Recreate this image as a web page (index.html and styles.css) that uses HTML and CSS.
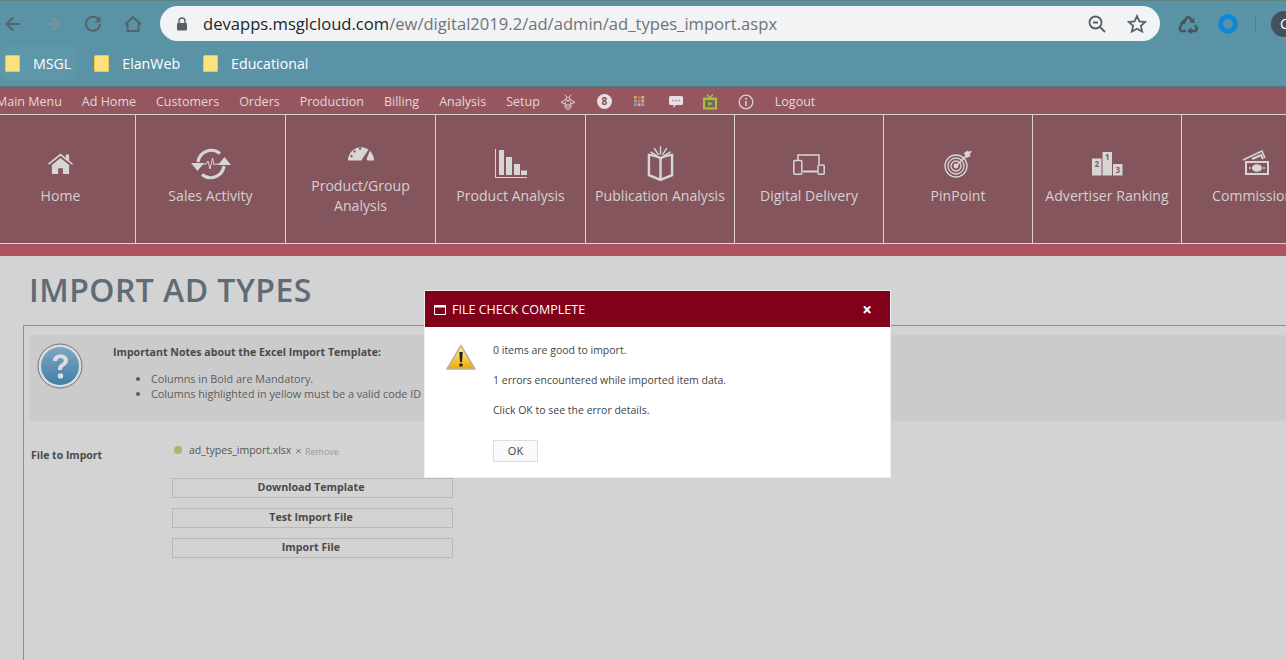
FILE: index.html
```html
<!DOCTYPE html>
<html>
<head>
	<title>Import Ad Types</title>
	<link rel="stylesheet" href="styles.css">
</head>
<body>

	<!-- Browser toolbar -->
	<div class="toolbar">
		<svg class="tool-icon back" viewBox="0 0 20 20"><path d="M17 10H4M10 3.500 3.500 10l6.500 6.500"/></svg>
		<svg class="tool-icon forward" viewBox="0 0 20 20"><path d="M3 10h13M10 3.500l6.500 6.500-6.500 6.500"/></svg>
		<svg class="tool-icon reload" viewBox="0 0 20 20"><path d="M16 6.200A7 7 0 1 0 17 10"/><path class="solid" d="M17.500 2.500v6h-6z"/></svg>
		<svg class="tool-icon home" viewBox="0 0 20 20"><path d="M2 10.500 10 3l8 7.500M4.500 9v8h11V9"/></svg>
		<div class="address">
			<svg class="lock" viewBox="0 0 12 14"><path d="M3 6V4a3 3 0 0 1 6 0v2" fill="none" stroke="#5a5f66" stroke-width="1.400"/><rect x="1" y="6" width="10" height="7.500" rx="1" fill="#5a5f66"/></svg>
			<span class="url"><b>devapps.msglcloud.com</b>/ew/digital2019.2/ad/admin/ad_types_import.aspx</span>
			<svg class="addr-icon" viewBox="0 0 20 20"><circle cx="8.500" cy="8.500" r="6"/><path d="M6 8.500h5M13 13l5 5"/></svg>
			<svg class="addr-icon star" viewBox="0 0 20 20"><path d="m10 2 2.400 5.400 5.800.6-4.300 3.900 1.200 5.700-5.100-2.900-5.100 2.900 1.200-5.700L1.800 8l5.800-.6z"/></svg>
		</div>
		<svg class="ext" viewBox="0 0 20 20"><path d="M6 8.500 9 3.500h2.500l2 3.500M17 11l2 3.500-1.500 2.500H13M8 17H3l-1.500-2.500L4 10"/><path class="solid" d="m11.500 8.500 5.500.5-1.500-5zM13.500 13.500v7l-4.500-3.500zM1.500 9.500l6 1-1-6z"/></svg>
		<span class="ring"></span>
		<span class="divider"></span>
		<span class="avatar">C</span>
	</div>

	<!-- Bookmarks -->
	<div class="bookmarks">
		<div class="bookmark current"><span class="folder"></span>MSGL</div>
		<div class="bookmark"><span class="folder"></span>ElanWeb</div>
		<div class="bookmark"><span class="folder"></span>Educational</div>
	</div>

	<!-- Text menu -->
	<div class="menu">
		<span>Main Menu</span>
		<span>Ad Home</span>
		<span>Customers</span>
		<span>Orders</span>
		<span>Production</span>
		<span>Billing</span>
		<span>Analysis</span>
		<span>Setup</span>
		<svg class="menu-icon" viewBox="0 0 16 16" fill="none" stroke="#d8d0d2"><ellipse cx="8" cy="11" rx="3" ry="4.500"/><circle cx="8" cy="5" r="1.800"/><path d="M6 5 1 8.500 5.500 10M10 5l5 3.500-4.500 1.500M6.500 3 5 .5M9.500 3 11 .5M5.200 11h5.600M5.600 13h4.800"/></svg>
		<span class="badge">8</span>
		<svg class="menu-icon grid" viewBox="0 0 12 12"><rect width="3" height="3" fill="#d9a05b"/><rect x="4" width="3" height="3" fill="#c76f6f"/><rect x="8" width="3" height="3" fill="#b9c46a"/><rect y="4" width="3" height="3" fill="#7fb58a"/><rect x="4" y="4" width="3" height="3" fill="#d07a8c"/><rect x="8" y="4" width="3" height="3" fill="#cfa9c4"/><rect y="8" width="3" height="3" fill="#7f9fd0"/><rect x="4" y="8" width="3" height="3" fill="#e0b060"/><rect x="8" y="8" width="3" height="3" fill="#70b8c4"/></svg>
		<svg class="menu-icon chat" viewBox="0 0 16 16"><path d="M2.500 2h11A1.500 1.500 0 0 1 15 3.500v6a1.500 1.500 0 0 1-1.500 1.500H8l-2.500 3V11h-3A1.500 1.500 0 0 1 1 9.500v-6A1.500 1.500 0 0 1 2.500 2z" fill="#e6e0e2"/><path d="M4 6.500h1.500M7.300 6.500h1.500M10.600 6.500h1.500" stroke="#a98a90" stroke-width="1.500"/></svg>
		<svg class="menu-icon tv" viewBox="0 0 16 16"><path d="M5 .5 8 3.500 11 .5" fill="none" stroke="#a6bf4b" stroke-width="1.300"/><rect x="1" y="3.500" width="14" height="12" fill="#a6bf4b"/><rect x="3" y="6" width="10" height="7.500" fill="#7b6a50"/><path d="m6.500 7.500 4 2.300-4 2.300z" fill="#a6bf4b"/></svg>
		<svg class="menu-icon" viewBox="0 0 16 16" fill="none" stroke="#d8d0d2" stroke-width="1.300"><circle cx="8" cy="8" r="6.800"/><path d="M8 7v5" stroke-width="1.600"/><circle cx="8" cy="4.700" r="1" fill="#d8d0d2" stroke="none"/></svg>
		<span class="logout">Logout</span>
	</div>

	<!-- Big tiles -->
	<div class="tiles">
		<div class="tile">
			<div class="tile-art">
				<svg class="art-home" viewBox="0 0 28 24" fill="#d6d6d6"><path d="M1 12 14 1.500l5.500 4.500V2.500h3.500V9l4 3-1 1.300L14 4 2 13.300z"/><path d="M5 13.500 14 6.200l9 7.300V23h-6.500v-6h-5v6H5z"/></svg>
			</div>
			<div class="tile-name">Home</div>
		</div>
		<div class="tile">
			<div class="tile-art">
				<svg class="art-sales" viewBox="0 0 40 32" fill="none" stroke="#d6d6d6"><path d="M7 14A13.500 13.500 0 0 1 29 5.500" stroke-width="3.200"/><path d="M33 18A13.500 13.500 0 0 1 11 26.500" stroke-width="3.200"/><path d="M0 15h13l-6.500 8zM27 17h13l-6.500-8z" fill="#d6d6d6" stroke="none"/><path d="M11 16h4l2-3 2 8 2.500-11 1.500 7 1.500-1H29" stroke-width="1"/></svg>
			</div>
			<div class="tile-name">Sales Activity</div>
		</div>
		<div class="tile">
			<div class="tile-art short">
				<svg class="art-gauge" viewBox="0 0 30 18" fill="#d6d6d6"><path fill-rule="evenodd" d="M1 17.500a14 14 0 0 1 28 0h-7l-1-1.500 3.500-9-1.500-1-5.500 8-2 3.500zM8 6.500a1.300 1.300 0 1 0 .01 0zM14 3.500a1.300 1.300 0 1 0 .01 0zM4.800 11.500a1.300 1.300 0 1 0 .01 0z"/></svg>
			</div>
			<div class="tile-name">Product/Group<br>Analysis</div>
		</div>
		<div class="tile">
			<div class="tile-art">
				<svg class="art-bars" viewBox="0 0 32 29" fill="#d6d6d6"><path d="M0 0h1v28h31v1H0z"/><rect x="4" y="1" width="5" height="25"/><rect x="11" y="8" width="6" height="18"/><rect x="19" y="15" width="6" height="11"/><rect x="26" y="21.500" width="6" height="4.500"/></svg>
			</div>
			<div class="tile-name">Product Analysis</div>
		</div>
		<div class="tile narrow">
			<div class="tile-art">
				<svg class="art-book" viewBox="0 0 28 36" fill="none" stroke="#d6d6d6" stroke-width="2.500"><path d="M14 12.500C10 10 6 9.500 2 9v21l12 5 12-5V9c-4 .5-8 1-12 3.500zM14 13v21"/><path d="M14 0v9M7.500 2l4.500 7M20.500 2 16 9M3.500 6l7 4M24.500 6l-7 4" stroke-width="1.500"/></svg>
			</div>
			<div class="tile-name">Publication Analysis</div>
		</div>
		<div class="tile narrow">
			<div class="tile-art">
				<svg class="art-devices" viewBox="0 0 32 21" fill="none" stroke="#d6d6d6" stroke-width="1.500"><path d="M5 6.500V1h21v9"/><rect x=".8" y="6.500" width="8" height="13.700" rx="1"/><rect x="25" y="11" width="6.200" height="9.200" rx="1"/><path d="M10 16.500h14v2H10z" fill="#d6d6d6" stroke="none"/></svg>
			</div>
			<div class="tile-name">Digital Delivery</div>
		</div>
		<div class="tile narrow">
			<div class="tile-art">
				<svg class="art-target" viewBox="0 0 28 28" fill="none" stroke="#d6d6d6" stroke-width="1.300"><circle cx="12" cy="16" r="11"/><circle cx="12" cy="16" r="8"/><circle cx="12" cy="16" r="5"/><circle cx="12" cy="16" r="1.800" fill="#d6d6d6"/><path d="M12 16 22 6" stroke-width="1.600"/><path d="m20 3 2 5 5-2-1.500-1.200L28 1l-4 .5-.5-1z" fill="#d6d6d6" stroke="none"/></svg>
			</div>
			<div class="tile-name">PinPoint</div>
		</div>
		<div class="tile narrow">
			<div class="tile-art">
				<svg class="art-podium" viewBox="0 0 31 24" fill="#d6d6d6"><rect y="6.500" width="9.500" height="17"/><rect x="10.500" width="9.500" height="23.500"/><rect x="21" y="12" width="9.500" height="11.500"/><text x="2.500" y="15" class="rank">2</text><text x="13" y="8" class="rank">1</text><text x="23.500" y="21" class="rank">3</text></svg>
			</div>
			<div class="tile-name">Advertiser Ranking</div>
		</div>
		<div class="tile narrow">
			<div class="tile-art">
				<svg class="art-money" viewBox="0 0 28 26" fill="none" stroke="#d6d6d6"><path d="M1 10 20 1l3 7" stroke-width="1.500"/><path d="M10 9l9-4 2 4" stroke-width="2"/><path fill-rule="evenodd" fill="#d6d6d6" stroke="none" d="M3 11h24v14H3zM5 13v10h20V13z"/><ellipse cx="15" cy="18" rx="5" ry="3.800" fill="#d6d6d6" stroke="none"/><path d="M7 18h2M21 18h2" stroke-width="1.500"/></svg>
			</div>
			<div class="tile-name">Commissions</div>
		</div>
	</div>
	<div class="band"></div>

	<!-- Page content -->
	<div class="page">
		<h1>IMPORT AD TYPES</h1>
		<div class="panel">
			<div class="notes">
				<svg class="help" viewBox="0 0 46 46">
					<defs>
						<linearGradient id="helpFill" x1="0" y1="0" x2="0" y2="1">
							<stop offset="0" stop-color="#7fa6c0"/>
							<stop offset="1" stop-color="#3f7fa8"/>
						</linearGradient>
					</defs>
					<circle cx="23" cy="23" r="22" fill="#dcdcdc" stroke="#6f7478" stroke-width="1"/>
					<circle cx="23" cy="23" r="19" fill="url(#helpFill)"/>
					<path d="M16 18c0-4 3-6.500 7.500-6.500 4.500 0 7.500 2.500 7.500 6 0 3-2 4.500-4 5.800-1.500 1-2 1.700-2 3.700h-4c0-3 .7-4.500 2.800-6 1.700-1.200 3-2 3-3.500 0-1.500-1.200-2.500-3.200-2.500-2 0-3.300 1.200-3.400 3z" fill="#dedede"/>
					<circle cx="23.500" cy="33" r="2.700" fill="#dedede"/>
				</svg>
				<div class="notes-text">
					<div class="notes-title">Important Notes about the Excel Import Template:</div>
					<ul>
						<li>Columns in Bold are Mandatory.</li>
						<li>Columns highlighted in yellow must be a valid code ID</li>
					</ul>
				</div>
			</div>
			<div class="file-form">
				<div class="file-label">File to Import</div>
				<div class="file-controls">
					<div class="file-row">
						<span class="dot"></span>
						<span class="file-name">ad_types_import.xlsx</span>
						<span class="remove"><i>&times;</i> Remove</span>
					</div>
					<div class="action">Download Template</div>
					<div class="action">Test Import File</div>
					<div class="action">Import File</div>
				</div>
			</div>
		</div>
	</div>

	<!-- Dialog over the page -->
	<div class="dialog">
		<div class="dialog-head">
			<svg class="window-icon" viewBox="0 0 12 11"><path d="M.5 1.500h11v9H.5z" fill="none" stroke="#fff"/><path d="M.5 1h11v2.500H.5z" fill="#fff"/></svg>
			<span class="dialog-title">FILE CHECK COMPLETE</span>
			<span class="dialog-close">&times;</span>
		</div>
		<div class="dialog-body">
			<svg class="warning" viewBox="0 0 30 27">
				<defs>
					<linearGradient id="warnFill" x1="0" y1="0" x2="0" y2="1">
						<stop offset="0" stop-color="#fff4a8"/>
						<stop offset="1" stop-color="#eda900"/>
					</linearGradient>
				</defs>
				<path d="M15 1.500 29 25H1z" fill="url(#warnFill)" stroke="#b9b39a" stroke-width="1.500" stroke-linejoin="round"/>
				<path d="M13.300 8h3.400l-.7 10h-2z" fill="#222"/>
				<circle cx="15" cy="21" r="1.800" fill="#222"/>
			</svg>
			<div class="dialog-text">
				<p>0 items are good to import.</p>
				<p>1 errors encountered while imported item data.</p>
				<p>Click OK to see the error details.</p>
				<div class="ok-button">OK</div>
			</div>
		</div>
	</div>

</body>
</html>
```

FILE: styles.css
```css
html, body {
	margin: 0;
	height: 660px;
	overflow: hidden;
}

body {
	position: relative;
	background-color: #d3d3d3;
	font-family: "Open Sans", "Noto Sans", sans-serif;
}

/* Browser toolbar */
.toolbar {
	height: 46px;
	box-sizing: border-box;
	padding: 5px 0 5px 3px;
	border-top: 1px solid #5f8183;
	background-color: #5b93a6;
	display: flex;
	align-items: center;
}

.tool-icon {
	width: 20px;
	height: 20px;
	margin-right: 20px;
	fill: none;
	stroke: #53646b;
	stroke-width: 2;
	flex: none;
}

.tool-icon .solid {
	fill: #53646b;
	stroke: none;
}

.tool-icon.forward {
	stroke: #7b929a;
}

.address {
	width: 1000px;
	height: 35px;
	margin-left: -3px;
	margin-right: 18px;
	padding: 0 13px 0 16px;
	box-sizing: border-box;
	border-radius: 18px;
	background-color: #f1f3f4;
	display: flex;
	align-items: center;
	flex: none;
}

.lock {
	width: 12px;
	height: 14px;
	margin-right: 15px;
	flex: none;
}

.url {
	flex: 1;
	font-size: 16.600px;
	color: #6e7479;
	white-space: nowrap;
}

.url b {
	font-weight: 400;
	color: #20262b;
}

.addr-icon {
	width: 20px;
	height: 20px;
	margin-left: 20px;
	fill: none;
	stroke: #5a5f66;
	stroke-width: 1.800;
}

.ext {
	width: 20px;
	height: 20px;
	flex: none;
	fill: none;
	stroke: #46555e;
	stroke-width: 2.400;
}

.ext .solid {
	fill: #46555e;
	stroke: none;
}

.ring {
	width: 20px;
	height: 20px;
	margin-left: 20px;
	box-sizing: border-box;
	border: 5.500px solid #0f87d6;
	border-radius: 50%;
	flex: none;
}

.divider {
	width: 1px;
	height: 20px;
	margin-left: 17px;
	background-color: #4f8496;
	flex: none;
}

.avatar {
	width: 26px;
	height: 26px;
	margin-left: 15px;
	padding-left: 9px;
	box-sizing: border-box;
	border-radius: 50%;
	background-color: #42525c;
	color: #fff;
	font-size: 14px;
	line-height: 26px;
	flex: none;
}

/* Bookmarks */
.bookmarks {
	height: 41px;
	box-sizing: border-box;
	padding-bottom: 6px;
	background-color: #5b93a6;
	display: flex;
	align-items: center;
	color: #fff;
	font-size: 14.200px;
	border-bottom: 1px solid #4f7a80;
}

.bookmark {
	height: 34px;
	padding: 0 6px 0 5px;
	border-radius: 10px;
	margin-right: 12px;
	display: flex;
	align-items: center;
}

.bookmark.current {
	background-color: #5f97aa;
}

.folder {
	width: 13px;
	height: 15px;
	margin-right: 13px;
	background-color: #ffe07e;
	border: 1px solid #f3c63f;
	border-radius: 2px 1px 1px 1px;
}

/* Text menu */
.menu {
	height: 27px;
	box-sizing: border-box;
	padding-top: 2px;
	margin-left: -4px;
	background-color: #96565f;
	color: #e2d6d8;
	font-size: 12.500px;
	display: flex;
	align-items: center;
	gap: 20px;
	white-space: nowrap;
}

.menu-icon {
	width: 16px;
	height: 16px;
	flex: none;
}

.menu-icon.grid {
	width: 11px;
	height: 11px;
	margin-left: 2px;
}

.menu-icon.chat {
	margin-left: 3px;
}

.menu-icon.tv {
	margin-left: -2px;
}

.logout {
	margin-left: 1px;
}

.badge {
	width: 15px;
	height: 15px;
	margin-left: 1px;
	border-radius: 50%;
	background-color: #e6e0e2;
	color: #8a4d56;
	font-size: 10px;
	font-weight: 700;
	line-height: 15px;
	text-align: center;
	flex: none;
}

/* Big tiles */
.tiles {
	height: 130px;
	margin-left: -14px;
	box-sizing: border-box;
	border-top: 1px solid #d9d3d4;
	border-bottom: 1px solid #d9d3d4;
	background-color: #85555d;
	display: flex;
}

.tile {
	width: 149px;
	flex: none;
	border-right: 1px solid #d9d3d4;
}

.tile.narrow {
	width: 148px;
}

.tile-art {
	height: 71px;
	display: flex;
	align-items: flex-end;
	justify-content: center;
}

.tile-art.short {
	height: 61px;
}

.tile-name {
	color: #d6d0d1;
	font-size: 14.100px;
	line-height: 20px;
	text-align: center;
	white-space: nowrap;
}

.art-home {
	width: 27px;
	height: 23px;
	margin-bottom: 11px;
}

.art-sales {
	width: 40px;
	height: 32px;
	margin-bottom: 6px;
}

.art-gauge {
	width: 28px;
	height: 17px;
	margin-bottom: 15px;
}

.art-bars {
	width: 32px;
	height: 29px;
	margin-bottom: 8px;
}

.art-book {
	width: 27px;
	height: 35px;
	margin-bottom: 5px;
}

.art-devices {
	width: 32px;
	height: 21px;
	margin-bottom: 11px;
}

.art-target {
	width: 28px;
	height: 28px;
	margin-bottom: 8px;
}

.art-podium {
	width: 31px;
	height: 24px;
	margin-bottom: 10px;
}

.art-money {
	width: 28px;
	height: 26px;
	margin-bottom: 10px;
}

.rank {
	fill: #85555d;
	font-size: 8px;
	font-weight: 700;
}

.band {
	height: 12px;
	background-color: #ae5461;
}

/* Page content */
.page {
	padding: 14px 0 0 23px;
}

h1 {
	margin: 0 0 15px 6px;
	color: #5f6b75;
	font-size: 32px;
	line-height: 40px;
	font-weight: 600;
	letter-spacing: 0.45px;
}

.panel {
	height: 325px;
	padding: 9px 0 0 5px;
	border-top: 1px solid #8f8f8f;
	border-left: 1px solid #8f8f8f;
}

.notes {
	height: 86px;
	box-sizing: border-box;
	padding: 8px 0 0 8px;
	background-color: #cbcbcb;
	display: flex;
}

.help {
	width: 46px;
	height: 46px;
	margin-right: 30px;
	flex: none;
}

.notes-text {
	color: #5c5c5c;
	font-size: 10.800px;
}

.notes-title {
	margin-top: 2px;
	color: #4a4a4a;
	font-size: 10.600px;
	font-weight: 700;
}

ul {
	margin: 12px 0 0;
	padding-left: 38px;
	line-height: 15px;
}

.file-form {
	padding: 22px 0 0 2px;
	display: flex;
}

.file-label {
	width: 141px;
	padding-top: 5px;
	color: #4a4a4a;
	font-size: 10.500px;
	font-weight: 700;
}

.file-controls {
	width: 281px;
}

.file-row {
	height: 16px;
	margin: -1px 0 20px;
	padding-left: 2px;
	display: flex;
	align-items: center;
	color: #555;
	font-size: 10.500px;
}

.dot {
	width: 8px;
	height: 8px;
	margin-right: 7px;
	border-radius: 50%;
	background-color: #a3b96e;
}

.remove {
	margin-left: 4px;
	color: #999;
	font-size: 9px;
	word-spacing: 1px;
}

.remove i {
	font-style: normal;
	font-size: 11px;
	color: #777;
}

.action {
	height: 20px;
	margin-bottom: 10px;
	padding-right: 3px;
	box-sizing: border-box;
	border: 1px solid #b8b8b8;
	color: #4a4a4a;
	font-size: 10.700px;
	font-weight: 700;
	line-height: 17px;
	text-align: center;
}

/* Dialog */
.dialog {
	position: absolute;
	left: 424px;
	top: 290px;
	width: 465px;
	height: 186px;
	border: 1px solid #eeeeee;
	background-color: #fff;
}

.dialog-head {
	height: 36px;
	padding: 0 18px 0 9px;
	background-color: #81001a;
	color: #fff;
	display: flex;
	align-items: center;
}

.window-icon {
	width: 12px;
	height: 11px;
	margin-right: 6px;
}

.dialog-title {
	flex: 1;
	font-size: 12.500px;
}

.dialog-close {
	font-size: 17px;
	font-weight: 700;
	line-height: 17px;
}

.dialog-body {
	padding: 16px 0 0 21px;
	display: flex;
}

.warning {
	width: 30px;
	height: 27px;
	margin: 1px 17px 0 0;
	flex: none;
}

.dialog-text {
	color: #444;
	font-size: 10.500px;
	line-height: 15px;
}

.dialog-text p {
	margin: 0 0 15px;
}

.ok-button {
	width: 45px;
	height: 22px;
	margin-top: 22px;
	box-sizing: border-box;
	border: 1px solid #dddddd;
	background-color: #fafafa;
	font-size: 11px;
	line-height: 20px;
	text-align: center;
}
```
